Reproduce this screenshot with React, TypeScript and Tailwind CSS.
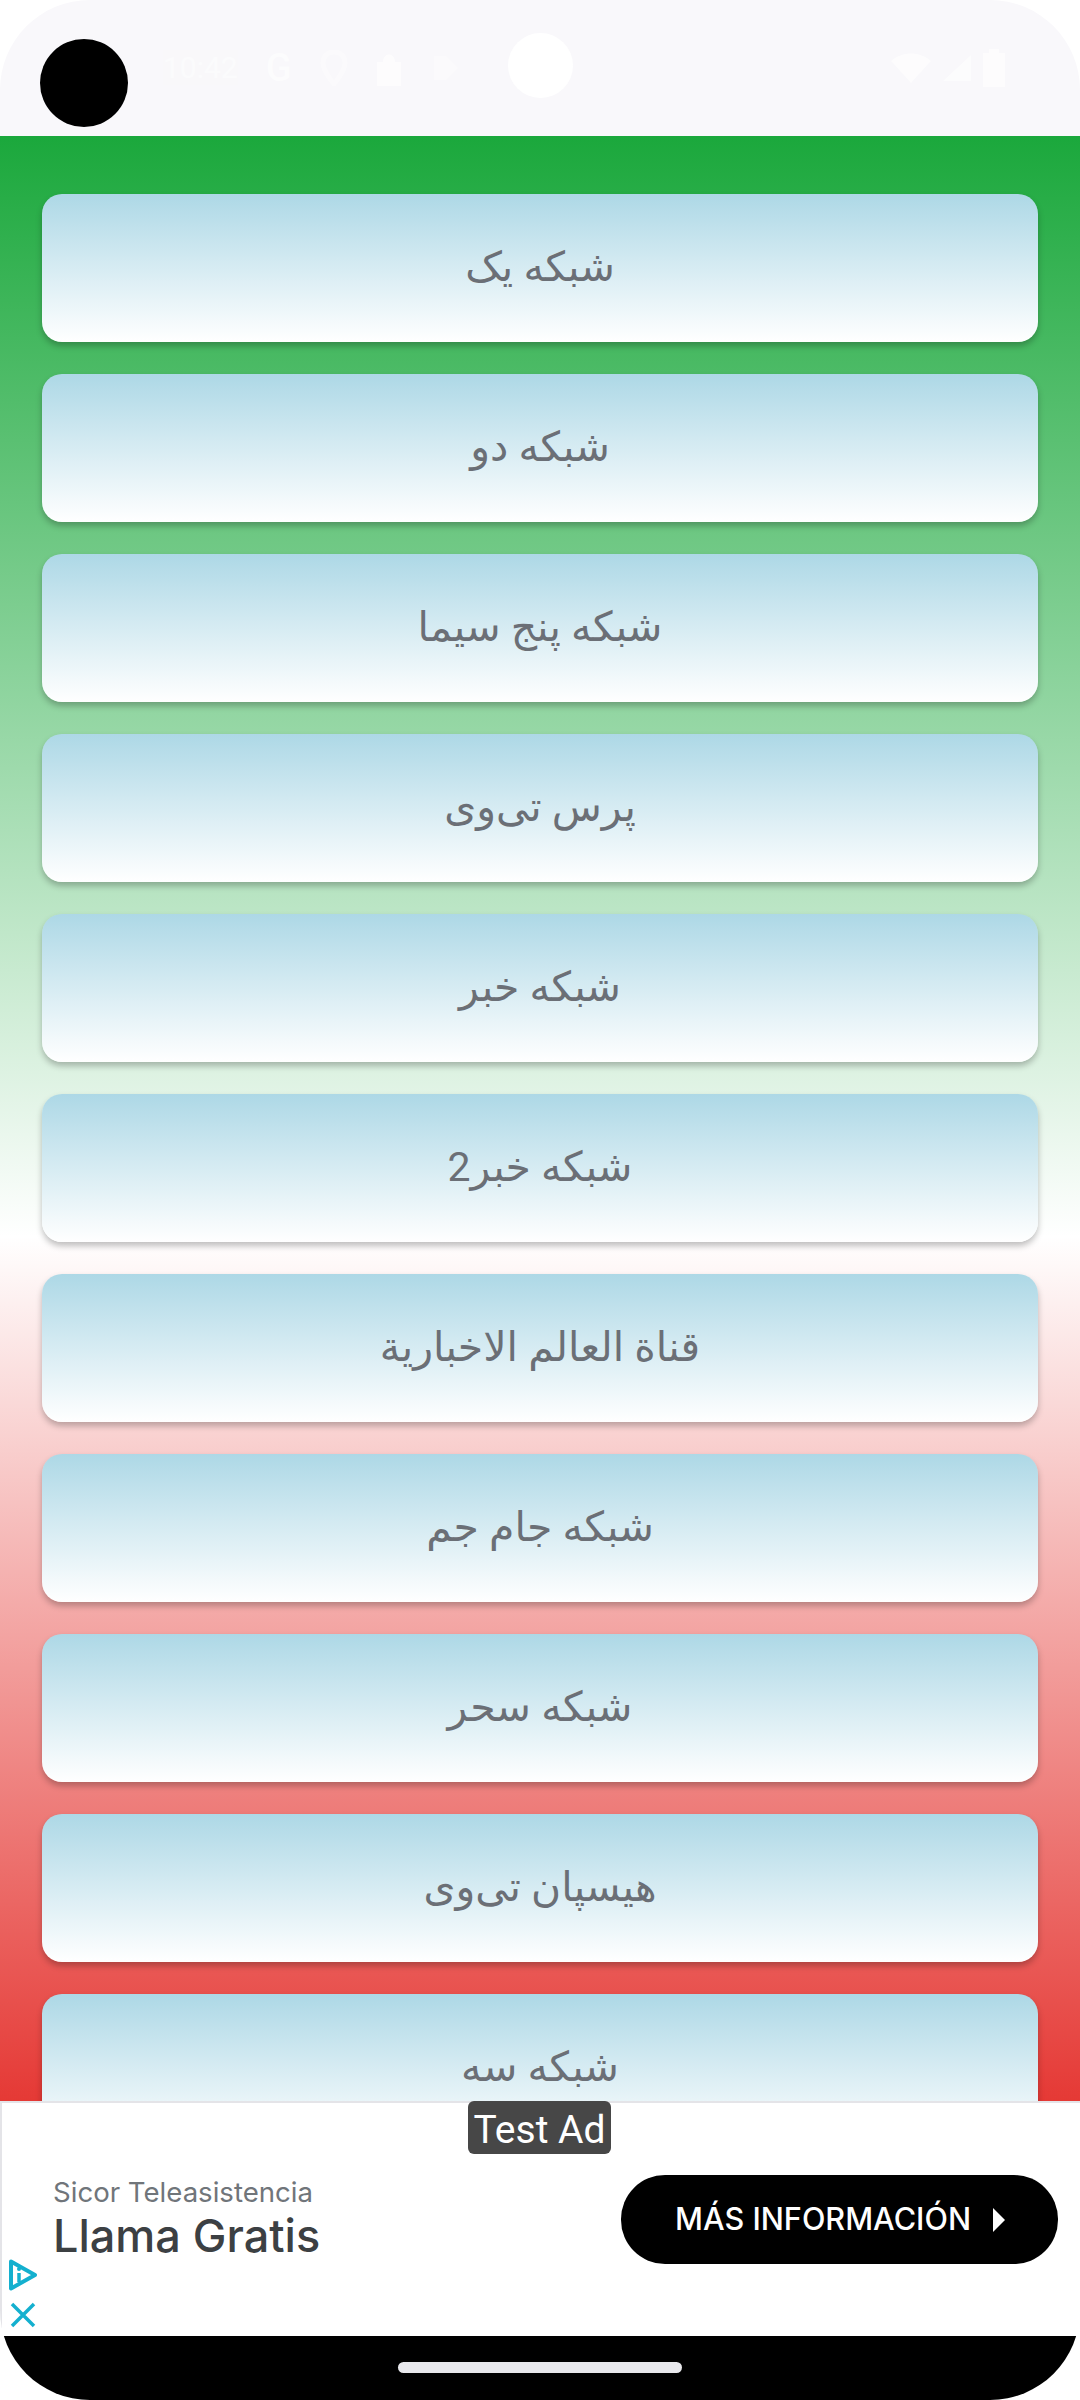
// Lista kanałów z paskiem statusu, reklamą testową i dolnym paskiem systemowym.

const CHANNELS = [
  "شبکه یک",
  "شبکه دو",
  "شبکه پنج سیما",
  "پرس تی‌وی",
  "شبکه خبر",
  "شبکه خبر2",
  "قناة العالم الاخبارية",
  "شبکه جام جم",
  "شبکه سحر",
  "هیسپان تی‌وی",
  "شبکه سه",
];

function StatusBar() {
  return (
    <header className="relative flex h-[136px] shrink-0 items-start bg-[#f9f8fb] pl-[40px] pt-[39px]">
      <div className="h-[88px] w-[88px] rounded-full bg-black" />
      <div className="ml-[35px] mt-[11px] flex h-[36px] items-center gap-[28px] text-white">
        <span className="font-['Roboto',sans-serif] text-[30px] leading-none opacity-40">10:42</span>
        <span className="font-['Roboto',sans-serif] text-[38px] font-medium leading-none opacity-60">G</span>
        <svg width="28" height="36" viewBox="0 0 28 36" className="opacity-40">
          <path d="M14 2C7 2 3 7 3 13c0 8 11 21 11 21s11-13 11-21C25 7 21 2 14 2z" fill="none" stroke="currentColor" strokeWidth="5" />
        </svg>
        <svg width="26" height="36" viewBox="0 0 26 36" className="opacity-70">
          <path d="M1 12h24v24H1z M7 12c0-10 12-10 12 0" fill="currentColor" />
        </svg>
        <svg width="32" height="36" viewBox="0 0 32 36" className="opacity-40">
          <path d="M4 6h12l12 12-12 12H4z" fill="currentColor" />
        </svg>
      </div>
      {/* Kropka aparatu */}
      <div className="absolute left-[508px] top-[33px] h-[65px] w-[65px] rounded-full bg-white" />
      <div className="absolute right-[75px] top-[50px] flex h-[36px] items-center gap-[10px] text-white">
        <svg width="40" height="30" viewBox="0 0 40 30" className="opacity-70">
          <path d="M0 8C11-2 29-2 40 8L20 30z" fill="currentColor" />
        </svg>
        <svg width="32" height="30" viewBox="0 0 32 30" className="opacity-60">
          <path d="M30 2v26H2z" fill="currentColor" />
        </svg>
        <svg width="22" height="38" viewBox="0 0 22 38" className="opacity-70">
          <path d="M6 0h10v4h6v34H0V4h6z" fill="currentColor" />
        </svg>
      </div>
    </header>
  );
}

function ChannelCard({ name }: { name: string }) {
  return (
    <button className="flex h-[148px] w-full shrink-0 items-center justify-center rounded-[20px] bg-gradient-to-b from-[#add8e6] to-white pb-[2px] font-['Roboto','DejaVu_Sans',sans-serif] text-[41px] leading-none text-[#6b6f76] shadow-[0_4px_6px_rgba(0,0,0,0.25)]">
      <span dir="rtl">{name}</span>
    </button>
  );
}

function AdBanner() {
  return (
    <section className="relative h-[235px] shrink-0 border-l-2 border-t-2 border-[#e4e4e8] bg-white pl-[51px] pr-[22px] pt-[72px]">
      <div className="absolute left-[466px] top-[-2px] flex h-[53px] w-[143px] items-center justify-center rounded-[6px] bg-[#474747] pt-[5px] font-['Roboto',sans-serif] text-[39px] leading-none text-white">
        Test Ad
      </div>
      <div className="flex items-start justify-between">
        <div className="flex flex-col pt-[1px]">
          <span className="font-['Inter',sans-serif] text-[27.6px] leading-[32px] text-[#70757a]">Sicor Teleasistencia</span>
          <span className="mt-[3px] font-['Inter',sans-serif] text-[45px] font-medium leading-[50px] text-[#3c4043]">Llama Gratis</span>
        </div>
        <button className="flex h-[89px] w-[437px] items-center rounded-[44px] bg-black pl-[54px] font-['Inter',sans-serif] text-[30.6px] font-medium leading-none text-white">
          <span>MÁS INFORMACIÓN</span>
          <svg width="14" height="24" viewBox="0 0 14 24" className="ml-[21px]">
            <path d="M1 0l12 12L1 24z" fill="currentColor" />
          </svg>
        </button>
      </div>
      {/* Znaczek AdChoices */}
      <div className="absolute bottom-[8px] left-[6px] flex w-[30px] flex-col items-center gap-[11px] text-[#14b0cf]">
        <svg width="30" height="32" viewBox="0 0 30 32">
          <path d="M3 2.5L27 16 3 29.5z" fill="none" stroke="currentColor" strokeWidth="4" strokeLinejoin="round" />
          <path d="M11 14v9" stroke="currentColor" strokeWidth="3.5" />
          <circle cx="11" cy="10" r="2" fill="currentColor" />
        </svg>
        <svg width="26" height="26" viewBox="0 0 26 26">
          <path d="M2 2l22 22M24 2L2 24" stroke="currentColor" strokeWidth="3.5" />
        </svg>
      </div>
    </section>
  );
}

export default function App() {
  return (
    <div className="flex h-[2400px] w-[1080px] flex-col overflow-hidden rounded-[90px] bg-white">
      <StatusBar />
      <main className="flex min-h-0 flex-1 flex-col gap-[32px] overflow-hidden bg-[linear-gradient(to_bottom,#1ba83c_0%,#ffffff_56%,#e53935_100%)] px-[42px] pt-[58px]">
        {CHANNELS.map((name) => (
          <ChannelCard key={name} name={name} />
        ))}
      </main>
      <AdBanner />
      <footer className="flex h-[64px] shrink-0 items-start justify-center bg-black pt-[26px]">
        <div className="h-[11px] w-[284px] rounded-full bg-[#e8e8ec]" />
      </footer>
    </div>
  );
}
